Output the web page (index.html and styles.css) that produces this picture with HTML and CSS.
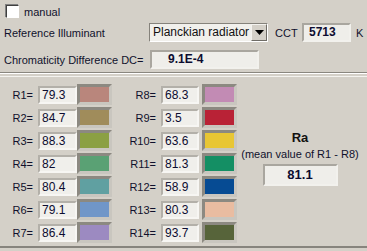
FILE: index.html
```html
<!DOCTYPE HTML>
<html>
	<head>
		<meta http-equiv="Content-Type" content="text/html; charset=utf-8">
		<title>cri</title>
		<link rel="stylesheet" href="styles.css">
	</head>
	<body>
		<div id="main_area">
			<div class="row row_check">
				<span class="check"></span><span class="lbl">manual</span>
			</div>
			<div class="row row_ref">
				<span class="lbl lbl_ref">Reference Illuminant</span>
				<div class="combo">
					<span class="combo_text">Planckian radiator</span>
					<span class="combo_btn"><svg width="9" height="5" viewBox="0 0 9 5"><polygon points="0,0 9,0 4.5,5" fill="#000"/></svg></span>
				</div>
				<span class="lbl lbl_cct">CCT</span>
				<span class="box box_cct">5713</span>
				<span class="lbl lbl_k">K</span>
			</div>
			<div class="row row_dc">
				<span class="lbl lbl_dc">Chromaticity Difference DC=</span>
				<span class="box box_dc">9.1E-4</span>
			</div>
		</div>
		<div id="ri_panel">
			<div class="ri_col col_left">
				<div class="ri_row"><span class="ri_lbl">R1=</span><span class="ri_val">79.3</span><span class="swatch" style="background:#b9867c"></span></div>
				<div class="ri_row"><span class="ri_lbl">R2=</span><span class="ri_val">84.7</span><span class="swatch" style="background:#a08c5b"></span></div>
				<div class="ri_row"><span class="ri_lbl">R3=</span><span class="ri_val">88.3</span><span class="swatch" style="background:#8ba043"></span></div>
				<div class="ri_row"><span class="ri_lbl">R4=</span><span class="ri_val">82</span><span class="swatch" style="background:#5aa174"></span></div>
				<div class="ri_row"><span class="ri_lbl">R5=</span><span class="ri_val">80.4</span><span class="swatch" style="background:#60a0a1"></span></div>
				<div class="ri_row"><span class="ri_lbl">R6=</span><span class="ri_val">79.1</span><span class="swatch" style="background:#7096c8"></span></div>
				<div class="ri_row"><span class="ri_lbl">R7=</span><span class="ri_val">86.4</span><span class="swatch" style="background:#9c8ac1"></span></div>
			</div>
			<div class="ri_col col_right">
				<div class="ri_row"><span class="ri_lbl">R8=</span><span class="ri_val">68.3</span><span class="swatch" style="background:#c28bb4"></span></div>
				<div class="ri_row"><span class="ri_lbl">R9=</span><span class="ri_val">3.5</span><span class="swatch" style="background:#b92236"></span></div>
				<div class="ri_row"><span class="ri_lbl">R10=</span><span class="ri_val">63.6</span><span class="swatch" style="background:#e8c634"></span></div>
				<div class="ri_row"><span class="ri_lbl">R11=</span><span class="ri_val">81.3</span><span class="swatch" style="background:#148f64"></span></div>
				<div class="ri_row"><span class="ri_lbl">R12=</span><span class="ri_val">58.9</span><span class="swatch" style="background:#064b93"></span></div>
				<div class="ri_row"><span class="ri_lbl">R13=</span><span class="ri_val">80.3</span><span class="swatch" style="background:#e9bca1"></span></div>
				<div class="ri_row"><span class="ri_lbl">R14=</span><span class="ri_val">93.7</span><span class="swatch" style="background:#57643a"></span></div>
			</div>
			<div class="ra_area">
				<div class="ra_title">Ra</div>
				<div class="ra_sub">(mean value of R1 - R8)</div>
				<div class="box ra_val">81.1</div>
			</div>
		</div>
	</body>
</html>
```

FILE: styles.css
```css
html,body{margin:0;padding:0;}
body{width:367px;height:251px;background:#d4d0c8;font-family:"Liberation Sans",Arial,sans-serif;font-size:11px;color:#10102c;overflow:hidden;}
#main_area{border-bottom:1px solid #8a877f;box-shadow:0 1px 0 #fff;box-sizing:border-box;height:73px;}
.row{display:flex;align-items:center;}
.row_check{height:13px;padding-top:5px;padding-left:5px;}
.check{width:11px;height:11px;background:#fff;border:1px solid;border-color:#404040 #fff #fff #404040;box-shadow:-1px -1px 0 #808080;margin-right:5px;margin-left:1px;}
.row_ref{margin-top:5px;height:19px;padding-left:4px;}
.lbl_ref{width:145px;}
.combo{display:flex;width:119px;height:19px;box-sizing:border-box;border:1px solid;border-color:#85827b #fff #fff #85827b;background:#f1f0ec;}
.combo_text{flex:1;padding-left:3px;line-height:17px;font-size:12px;color:#111;}
.combo_btn{width:16px;height:17px;box-sizing:border-box;background:#d4d0c8;border:1px solid;border-color:#f4f3ef #6f6c66 #6f6c66 #f4f3ef;display:flex;align-items:center;justify-content:center;}
.lbl_cct{margin-left:7px;width:27px;}
.box{box-sizing:border-box;border:2px solid;border-color:#a9a69f #f2f1ed #f2f1ed #a9a69f;background:#efeeea;font-weight:bold;font-size:12px;color:#0c0c30;}
.box_cct{width:49px;height:19px;line-height:15px;padding-left:5px;}
.lbl_k{margin-left:5px;}
.row_dc{margin-top:8px;height:19px;padding-left:4px;}
.lbl_dc{width:146px;}
.box_dc{width:109px;height:19px;line-height:15px;padding-left:16px;}
#ri_panel{margin-top:3px;height:172px;box-sizing:border-box;border-top:1px solid #f4f3ef;border-bottom:2px solid #87847d;display:flex;padding-top:7px;}
.ri_row{display:flex;align-items:center;height:21px;margin-bottom:2px;}
.ri_lbl{text-align:right;}
.col_left .ri_lbl{width:33px;}
.col_right .ri_lbl{width:44px;}
.ri_val{margin-left:5px;width:39px;height:18px;box-sizing:border-box;border:2px solid;border-color:#b3b0a9 #f7f6f3 #f7f6f3 #b3b0a9;background:#f0efeb;font-size:12px;line-height:15px;padding-left:2px;color:#0c0c30;}
.col_right .ri_val{width:38px;}
.swatch{width:35px;height:21px;box-sizing:border-box;border:3px solid;border-color:#8c8981 #c9c6bf #c9c6bf #8c8981;}
.col_right .swatch{margin-left:3px;}
.ra_area{flex:1;display:flex;flex-direction:column;align-items:center;padding-top:46px;padding-right:4px;}
.ra_title{font-weight:bold;font-size:13px;color:#111;}
.ra_sub{margin-top:3px;}
.ra_val{margin-top:4px;width:75px;height:22px;line-height:18px;text-align:center;font-size:13px;}
```
